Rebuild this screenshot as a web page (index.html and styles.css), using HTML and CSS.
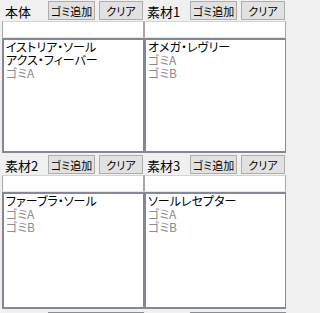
FILE: index.html
```html
<!DOCTYPE html>
<html lang="ja">
<head>
<meta charset="utf-8">
<link rel="stylesheet" href="styles.css">
</head>
<body>
<div class="app">
  <section class="panel">
    <div class="head"><span class="label">本体</span><button class="btn add">ゴミ追加</button><button class="btn clear">クリア</button></div>
    <div class="input"></div>
    <ul class="list">
      <li>イストリア・ソール</li>
      <li>アクス・フィーバー</li>
      <li class="junk">ゴミA</li>
    </ul>
  </section>
  <section class="panel">
    <div class="head"><span class="label">素材1</span><button class="btn add">ゴミ追加</button><button class="btn clear">クリア</button></div>
    <div class="input"></div>
    <ul class="list">
      <li>オメガ・レヴリー</li>
      <li class="junk">ゴミA</li>
      <li class="junk">ゴミB</li>
    </ul>
  </section>
  <section class="panel">
    <div class="head"><span class="label">素材2</span><button class="btn add">ゴミ追加</button><button class="btn clear">クリア</button></div>
    <div class="input"></div>
    <ul class="list">
      <li>ファーブラ・ソール</li>
      <li class="junk">ゴミA</li>
      <li class="junk">ゴミB</li>
    </ul>
  </section>
  <section class="panel">
    <div class="head"><span class="label">素材3</span><button class="btn add">ゴミ追加</button><button class="btn clear">クリア</button></div>
    <div class="input"></div>
    <ul class="list">
      <li>ソールレセプター</li>
      <li class="junk">ゴミA</li>
      <li class="junk">ゴミB</li>
    </ul>
  </section>
  <div class="strip"><span class="seg"></span></div>
  <div class="strip"><span class="seg"></span></div>
</div>
</body>
</html>
```
FILE: styles.css
```css
html, body {
  margin: 0;
  padding: 0;
  background: #f0f0f0;
}
body {
  overflow: hidden;
}
.app {
  width: 285px;
  height: 313px;
  display: grid;
  grid-template-columns: 142px 142px;
  grid-template-rows: 154px 156px 3px;
  padding-left: 2px;
  font-family: "Noto Sans CJK JP", "Noto Sans", sans-serif;
  font-feature-settings: "palt";
}
.panel {
  display: flex;
  flex-direction: column;
  padding-bottom: 1px;
  min-width: 0;
}
.head {
  display: flex;
  align-items: flex-start;
  height: 21px;
  flex: none;
}
.label {
  width: 43px;
  padding-left: 3px;
  padding-top: 4px;
  font-size: 13px;
  line-height: 16px;
  color: #000;
  white-space: nowrap;
}
.btn {
  margin: 1px 0 0 0;
  padding: 0;
  height: 19px;
  background: #e1e1e1;
  border: 1px solid #adadad;
  font-family: inherit;
  font-size: 11px;
  line-height: 16px;
  color: #000;
  white-space: nowrap;
  overflow: hidden;
  font-feature-settings: "palt";
}
.add { width: 47px; }
.clear { width: 44px; margin-left: 4px; }
.input {
  height: 15px;
  flex: none;
  background: #fff;
  border-top: 1px solid #d4d4d4;
  border-left: 1px solid #a6a6a6;
  border-right: 1px solid #a6a6a6;
  border-bottom: 1px solid #e6e6e6;
}
.list {
  flex: 1;
  margin: 0;
  padding: 0 0 0 2px;
  list-style: none;
  background: #fff;
  border-top: 2px solid #858892;
  border-left: 2px solid #858892;
  border-right: 1px solid #858892;
  border-bottom: 2px solid #858892;
  font-size: 12px;
  line-height: 13px;
  color: #000;
}
.list li { white-space: nowrap; }
.list .junk { color: #8c8c8c; }
.strip {
  display: flex;
  align-items: flex-end;
}
.seg {
  flex: 1;
  margin-left: 46px;
  height: 1px;
  background: #8a8d96;
}
```
